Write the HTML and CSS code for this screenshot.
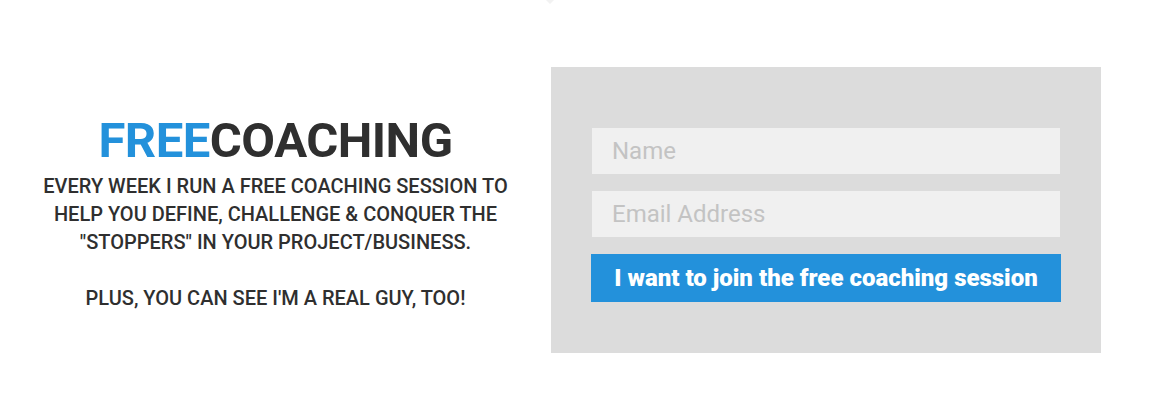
FILE: index.html
```html
<!DOCTYPE html>
<html>
<head>
<meta charset="utf-8">
<link rel="stylesheet" href="styles.css">
</head>
<body>
<div class="notch"></div>
<section class="optin">
  <div class="pitch">
    <h1 class="title"><span class="accent">FREE</span>COACHING</h1>
    <p class="copy">EVERY WEEK I RUN A FREE COACHING SESSION TO HELP YOU DEFINE, CHALLENGE &amp; CONQUER THE "STOPPERS" IN YOUR PROJECT/BUSINESS.</p>
    <p class="copy">PLUS, YOU CAN SEE I'M A REAL GUY, TOO!</p>
  </div>
  <form class="form-box">
    <input class="field" type="text" placeholder="Name">
    <input class="field" type="email" placeholder="Email Address">
    <button class="submit" type="button">I want to join the free coaching session</button>
  </form>
</section>
</body>
</html>
```
FILE: styles.css
```css
html, body {
  margin: 0;
  padding: 0;
  background: #ffffff;
  width: 1160px;
  height: 411px;
  overflow: hidden;
  font-family: Roboto, "Liberation Sans", sans-serif;
}
body { position: relative; }
.notch {
  position: absolute;
  left: 546px;
  top: 0;
  width: 0;
  height: 0;
  border-left: 4px solid transparent;
  border-right: 4px solid transparent;
  border-top: 4px solid #f2f2f2;
}
.optin {
  display: flex;
  align-items: flex-start;
  padding-top: 67px;
}
.pitch {
  width: 551px;
  text-align: center;
  color: #2f2f2f;
  padding-top: 49px;
}
.title {
  margin: 0;
  font-size: 49px;
  font-weight: 700;
  line-height: 50px;
  letter-spacing: -0.5px;
  color: #2f2f2f;
}
.accent { color: #2391db; }
.copy {
  max-width: 472px;
  margin: 6px auto 28px;
  font-size: 20px;
  font-weight: 500;
  line-height: 28px;
}
.copy + .copy { margin-top: 0; }
.form-box {
  width: 550px;
  height: 286px;
  box-sizing: border-box;
  background: #dcdcdc;
  padding: 61px 40px 0 40px;
  display: flex;
  flex-direction: column;
  align-items: center;
}
.field {
  width: 468px;
  height: 46px;
  box-sizing: border-box;
  border: none;
  outline: none;
  background: #f0f0f0;
  padding: 0 20px;
  margin: 0 0 17px;
  font-family: Roboto, "Liberation Sans", sans-serif;
  font-size: 24px;
  color: #333;
}
.field::placeholder { color: #c3c3c3; }
.submit {
  width: 470px;
  height: 48px;
  border: none;
  background: #2391db;
  color: #ffffff;
  font-family: Roboto, "Liberation Sans", sans-serif;
  font-size: 24px;
  font-weight: 900;
  letter-spacing: 0;
  padding: 0;
  cursor: pointer;
}
```
